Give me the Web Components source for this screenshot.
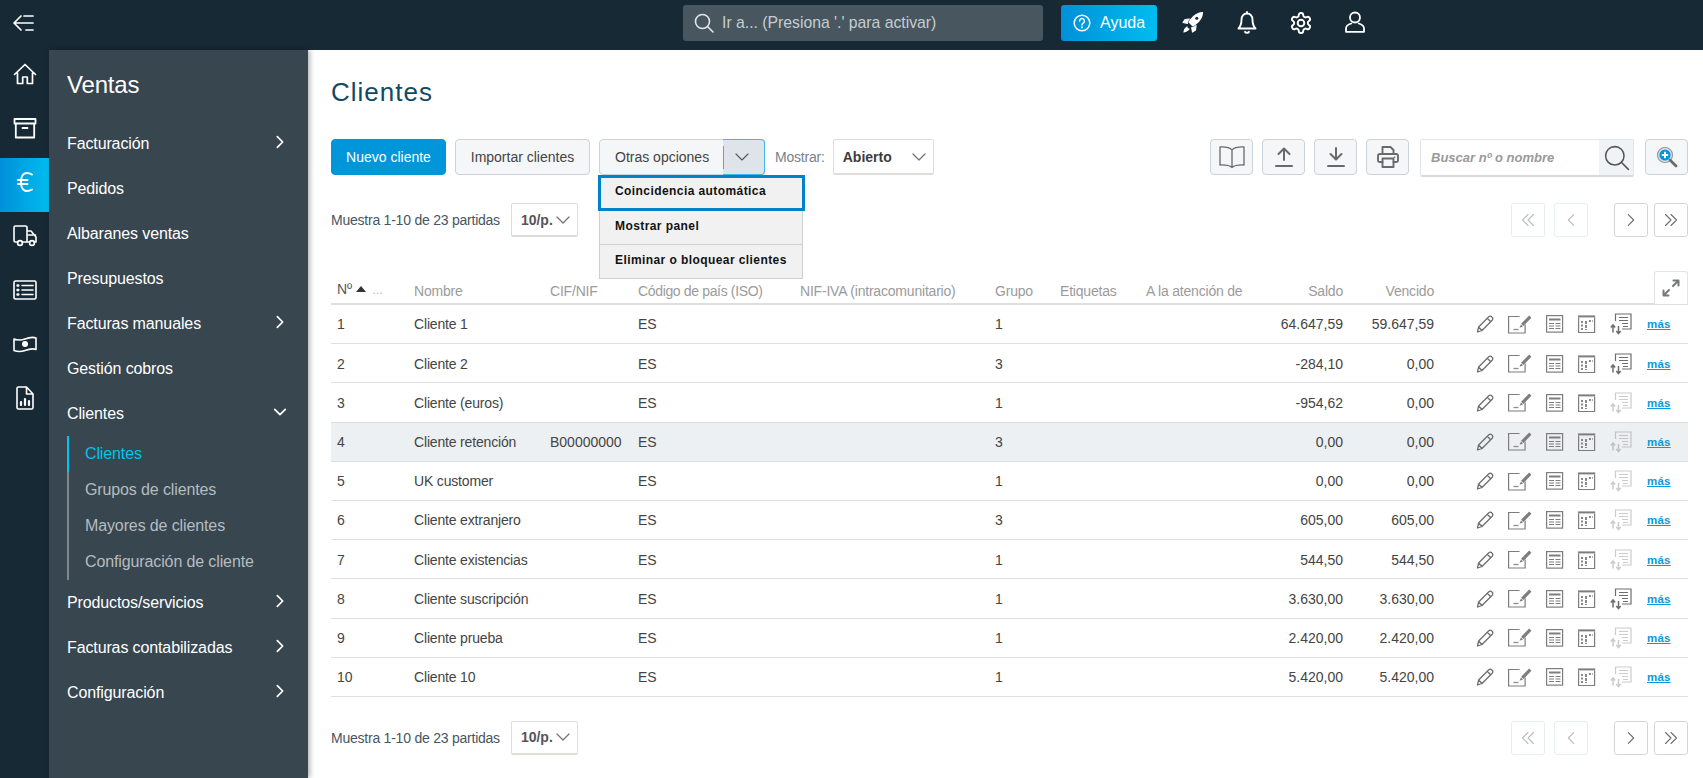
<!DOCTYPE html>
<html lang="es">
<head>
<meta charset="utf-8">
<title>Clientes</title>
<style>
	html, body { margin: 0; height: 100%; }
	body { font: 14px "Liberation Sans", Arial, sans-serif; color: #333; overflow: hidden; }
</style>
</head>
<body>
<erp-app>
	<top-bar slot="top"></top-bar>
	<icon-rail slot="rail"></icon-rail>
	<side-nav slot="nav"></side-nav>
	<clients-page slot="main"></clients-page>
</erp-app>

<script>
const svg = (w, h, vb, body, sw = 1.6) =>
	`<svg width="${w}" height="${h}" viewBox="${vb}" fill="none" stroke="currentColor" stroke-width="${sw}" stroke-linecap="round" stroke-linejoin="round">${body}</svg>`

const chevron = (size, dir, sw = 2) => {
	const paths = { right: "M8 4l8 8-8 8", left: "M16 4l-8 8 8 8", down: "M4 8l8 8 8-8" }
	return svg(size, size, "0 0 24 24", `<path d="${paths[dir]}"/>`, sw)
}

const icons = {
	back: svg(22, 18, "0 0 22 18", `<path d="M9 2L2 9l7 7M2 9h19M12 2h9M14 16h7" />`, 1.7),
	home: svg(24, 24, "0 0 24 24", `<path d="M1.5 12.5L12 2.5l10.5 10M4.5 11v10.5h5.2v-6.5h4.6v6.5h5.2V11"/>`, 1.7),
	archive: svg(24, 24, "0 0 24 24", `<path d="M1.5 3h21v4.5h-21zM2.8 7.5v14h18.4v-14M9.5 12h5"/>`, 1.8),
	euro: svg(16, 20, "0 0 16 20", `<path d="M15 2.5C13 1.300 11.500 1 10 1 6 1 4 5 4 10s2 9 6 9c1.500 0 3-.3 5-1.500M1 8h9.500M1 12h9.500"/>`, 2),
	truck: svg(24, 22, "0 0 24 22", `<path d="M5 17H2.500A1.500 1.500 0 0 1 1 15.500V2.500A1.500 1.500 0 0 1 2.500 1h10A1.500 1.500 0 0 1 14 2.500V17H9M14 6h4l5 6v5h-2M14 17h3M15.500 10h7"/><circle cx="7" cy="18" r="2.400"/><circle cx="19" cy="18" r="2.400"/>`, 1.6),
	list: svg(24, 20, "0 0 24 20", `<rect x="1" y="1" width="22" height="18" rx="1.500"/><path d="M9 5.500h11M9 10h11M9 14.500h11"/><path d="M4.500 5.500h.8M4.500 10h.8M4.500 14.500h.8" stroke-width="2.400"/>`, 1.6),
	money: svg(24, 18, "0 0 24 18", `<path d="M1 4c4 1.500 7 1.500 11 0s7-2.500 11-1v11.500c-4-1.500-7-.5-11 1s-7 1.500-11 0z"/><circle cx="12" cy="9" r="3" fill="currentColor" stroke="none"/>`, 1.6),
	report: svg(18, 24, "0 0 18 24", `<path d="M2.500 1h8L17 8v13.500a1.500 1.500 0 0 1-1.500 1.500h-13A1.500 1.500 0 0 1 1 21.500v-19A1.500 1.500 0 0 1 2.500 1zM10.500 1v7H17"/><path d="M5 19v-3M9 19v-6M13 19v-4" stroke-width="2.200"/>`, 1.6),
	search: svg(20, 20, "0 0 20 20", `<circle cx="8.500" cy="8.500" r="7"/><path d="M13.500 13.500l5.500 5.500"/>`, 1.6),
	help: svg(18, 18, "0 0 18 18", `<circle cx="9" cy="9" r="7.800"/><path d="M6.600 7a2.400 2.400 0 1 1 3.600 2.100c-.8.5-1.200.9-1.200 1.800"/><path d="M9 13.300v.1" stroke-width="1.900"/>`, 1.5),
	rocket: svg(22, 22, "0 0 22 22", `<path d="M20.500 1.500c-5 .3-8.500 2.800-11.300 6.500L7 11l4 4 3-2.200c3.700-2.800 6.200-6.300 6.500-11.300z" fill="currentColor"/><path d="M7.500 8L3 8.500 1 11.500l4.500.8M14 14.500l-.5 4.500-3 2-.8-4.500M5 16c-1.500.8-2.500 2.500-3 5 2.500-.5 4.200-1.500 5-3" fill="currentColor"/><circle cx="14.800" cy="7.200" r="1.500" fill="#172935" stroke="none"/>`, 1.2),
	bell: svg(20, 24, "0 0 20 24", `<path d="M10 2.500c-3.600 0-5.500 2.800-5.500 6 0 4.500-1 7-3 9h17c-2-2-3-4.500-3-9 0-3.200-1.900-6-5.500-6zM10 1v1.500M8 20.800c.5 1.300 3.500 1.300 4 0"/>`, 1.9),
	gear: svg(24, 24, "0 0 24 24", `<path d="M12.220 2h-.44a2 2 0 0 0-2 2v.18a2 2 0 0 1-1 1.730l-.43.250a2 2 0 0 1-2 0l-.15-.08a2 2 0 0 0-2.730.730l-.22.380a2 2 0 0 0 .730 2.730l.15.100a2 2 0 0 1 1 1.720v.510a2 2 0 0 1-1 1.740l-.15.090a2 2 0 0 0-.730 2.730l.22.380a2 2 0 0 0 2.730.730l.15-.08a2 2 0 0 1 2 0l.43.250a2 2 0 0 1 1 1.730V20a2 2 0 0 0 2 2h.44a2 2 0 0 0 2-2v-.18a2 2 0 0 1 1-1.730l.43-.25a2 2 0 0 1 2 0l.15.080a2 2 0 0 0 2.730-.730l.22-.390a2 2 0 0 0-.730-2.730l-.15-.08a2 2 0 0 1-1-1.740v-.5a2 2 0 0 1 1-1.740l.15-.090a2 2 0 0 0 .730-2.730l-.22-.380a2 2 0 0 0-2.730-.730l-.15.080a2 2 0 0 1-2 0l-.43-.250a2 2 0 0 1-1-1.730V4a2 2 0 0 0-2-2z"/><circle cx="12" cy="12" r="3.300"/>`, 1.9),
	user: svg(20, 22, "0 0 20 22", `<circle cx="10" cy="6.500" r="5"/><path d="M6.300 12.500C3 13.500 1 15 1 17.500v3.300h18v-3.300c0-2.500-2-4-5.300-5"/>`, 1.8),
	book: svg(28, 24, "0 0 28 24", `<path d="M14 5C12 2.800 8 1.800 2 2v18c6-.2 10 .8 12 2.500 2-1.700 6-2.700 12-2.500V2c-6-.2-10 .8-12 3zM14 5v17.500"/>`, 1.3),
	upload: svg(20, 22, "0 0 20 22", `<path d="M10 14V3M4.500 8L10 2.500 15.500 8M2 20h16"/>`, 2),
	download: svg(20, 22, "0 0 20 22", `<path d="M10 2v11M4.500 8l5.500 5.500L15.500 8M2 20h16"/>`, 2),
	print: svg(24, 24, "0 0 24 24", `<path d="M6.500 9V2h8l3 3v4M6.500 17H3.500A1.500 1.500 0 0 1 2 15.500V11a2 2 0 0 1 2-2h16a2 2 0 0 1 2 2v4.500a1.500 1.500 0 0 1-1.500 1.500h-3"/><path d="M6.500 13.500h11V22h-11z"/><path d="M18.500 12.200h.2" stroke-width="1.6"/>`, 1.9),
	zoomPlus: `<svg width="22" height="22" viewBox="0 0 22 22" fill="none"><circle cx="9" cy="9" r="7.500" fill="#dde3e6" stroke="#8f9a9f" stroke-width="1.200"/><path d="M14 14l6 6" stroke="#6b6b6b" stroke-width="2.800" stroke-linecap="round"/><circle cx="9" cy="9" r="5.600" fill="#0096db"/><path d="M9 5.800v6.400M5.800 9h6.400" stroke="#fff" stroke-width="2"/></svg>`,
	expand: svg(18, 18, "0 0 18 18", `<path d="M11 7l5-5M11.500 1.500h5v5" /><path d="M7 11l-5 5M1.500 11.500v5h5"/>`, 2),
	pencil: svg(18, 18, "0 0 18 18", `<path d="M12.800 1.800a2 2 0 0 1 2.900 0l.5.500a2 2 0 0 1 0 2.900L6 15.500 1.500 17 2.600 12zM11.300 3.300l3.400 3.400M2.600 12L6 15.500"/>`, 1.3),
	sign: `<svg width="24" height="19" viewBox="0 0 24 19" fill="none"><path d="M11.500 1.500H.6V18h16.500V9.500" stroke="#7d7d7d" stroke-width="1.200"/><path d="M21.200.6l2.200 2.200-8 8.200-2.300-2.200z" fill="#7d7d7d"/><path d="M13 9.500l2 2-3.500 1.300z" fill="#7d7d7d"/><path d="M5.500 14.500h5" stroke="#8d8d8d" stroke-width="1.300"/></svg>`,
	lines: `<svg width="18" height="18" viewBox="0 0 18 18" fill="none" stroke="#7d7d7d"><rect x=".6" y=".6" width="16" height="16.500" stroke-width="1.200"/><path d="M3 4.500h11.500" stroke-width="2"/><path d="M3 8.500h5M9.500 8.500h5M3 11h5M9.500 11h5M3 13.500h5M9.500 13.500h5" stroke-width="1"/></svg>`,
	cal: `<svg width="18" height="18" viewBox="0 0 18 18" fill="none" stroke="#7d7d7d"><path d="M.6 2.500v15h16v-15" stroke-width="1.200"/><path d="M0 1.400h17.200" stroke-width="2"/><path d="M4 6v2M4 9.500v2M4 13v2" stroke-width="1.800"/><path d="M8 6v9" stroke-width="1.800" stroke-dasharray="3 1"/><path d="M11 6h1.800M14 6h.6" stroke-width="1.800"/></svg>`,
	move: `<svg width="22" height="22" viewBox="0 0 22 22" fill="none" stroke="currentColor"><path d="M5.500 8V1h15.500v15H12" stroke-width="1.200"/><path d="M9 4.500h9M9 7.500h9M12 10.500h6M13 13.500h5" stroke-width="1.200"/><path d="M3 19.500v-7M.8 14.500L3 12l2.200 2.500" stroke-width="1.500"/><path d="M8.500 13v7.500M6.300 18l2.200 2.500 2.200-2.500" stroke-width="1.500"/></svg>`
}

class ErpApp extends HTMLElement {
	constructor() {
		super()
		this.attachShadow({ mode: "open" })
		this.shadowRoot.innerHTML = /*html*/ `<style>
			:host { display: grid; grid-template: 50px 1fr / 49px 259px 1fr; height: 100vh; background: #fff; }
			::slotted([slot=top]) { grid-column: 1 / -1; }
		</style>
		<slot name="top"></slot><slot name="rail"></slot><slot name="nav"></slot><slot name="main"></slot>`
	}
}

class TopBar extends HTMLElement {
	constructor() {
		super()
		this.attachShadow({ mode: "open" })
		this.shadowRoot.innerHTML = /*html*/ `<style>
			:host { display: flex; align-items: center; background: #172935; color: #fff; height: 50px; padding-bottom: 4px; box-sizing: border-box; }
			.back { margin-left: 12px; display: flex; margin-right: auto; }
			.search { width: 360px; height: 36px; border-radius: 3px; background: #47565f; display: flex; align-items: center; color: #e3e7ea; box-sizing: border-box; padding-left: 11px; gap: 8px; }
			.search span { font-size: 15.75px; color: #c6cdd1; }
			.help { width: 96px; height: 36px; margin-left: 18px; border-radius: 3px; background: linear-gradient(90deg, #0090d9, #00bcee); display: flex; align-items: center; padding-left: 12px; box-sizing: border-box; gap: 9px; font-size: 16px; }
			.tool { display: flex; justify-content: center; width: 54px; }
			.tools { display: flex; margin: 0 321px 0 9px; }
		</style>
		<div class="back">${icons.back}</div>
		<div class="search">${icons.search}<span>Ir a... (Presiona '.' para activar)</span></div>
		<div class="help">${icons.help}<span>Ayuda</span></div>
		<div class="tools">
			<div class="tool">${icons.rocket}</div>
			<div class="tool">${icons.bell}</div>
			<div class="tool">${icons.gear}</div>
			<div class="tool">${icons.user}</div>
		</div>`
	}
}

class IconRail extends HTMLElement {
	constructor() {
		super()
		this.attachShadow({ mode: "open" })
		const names = ["home", "archive", "euro", "truck", "list", "money", "report"]
		this.shadowRoot.innerHTML = /*html*/ `<style>
			:host { display: block; background: #172935; color: #fff; }
			div { height: 54px; padding-bottom: 6px; box-sizing: border-box; display: flex; align-items: center; justify-content: center; }
			.on { background: linear-gradient(90deg, #0090d9, #00bcee); }
		</style>
		${names.map((n) => `<div class="${n === "euro" ? "on" : ""}">${icons[n]}</div>`).join("")}`
	}
}

class NavItem extends HTMLElement {
	constructor() {
		super()
		this.attachShadow({ mode: "open" })
	}
	connectedCallback() {
		const arrow = this.getAttribute("arrow")
		this.shadowRoot.innerHTML = /*html*/ `<style>
			:host { display: flex; align-items: center; justify-content: space-between; height: 45px; padding: 0 20px 0 18px; color: #fff; font-size: 16px; letter-spacing: -.12px; }
			span { display: flex; margin-top: -3px; }
		</style>
		<slot></slot><span>${arrow ? chevron(16, arrow, 2.6) : ""}</span>`
	}
}

class SideNav extends HTMLElement {
	constructor() {
		super()
		this.attachShadow({ mode: "open" })
		this.shadowRoot.innerHTML = /*html*/ `<style>
			:host { display: block; background: #37464f; box-shadow: 2px 0 5px rgba(0,0,0,.3); position: relative; z-index: 1; }
			h2 { margin: 0; padding: 20px 18px 21px; font: 24px/30px "Liberation Sans", Arial, sans-serif; color: #fff; letter-spacing: -.2px; }
			.sub { margin-left: 18px; border-left: 2px solid #7d878d; }
			.sub div { height: 36px; line-height: 36px; padding-left: 16px; font-size: 16px; letter-spacing: -.12px; color: #b6bcc0; }
			.sub div.on { color: #00c3f0; margin-left: -2px; border-left: 2px solid #00c3f0; }
		</style>
		<h2>Ventas</h2>
		<nav-item arrow="right">Facturación</nav-item>
		<nav-item>Pedidos</nav-item>
		<nav-item>Albaranes ventas</nav-item>
		<nav-item>Presupuestos</nav-item>
		<nav-item arrow="right">Facturas manuales</nav-item>
		<nav-item>Gestión cobros</nav-item>
		<nav-item arrow="down">Clientes</nav-item>
		<div class="sub">
			<div class="on">Clientes</div>
			<div>Grupos de clientes</div>
			<div>Mayores de clientes</div>
			<div>Configuración de cliente</div>
		</div>
		<nav-item arrow="right">Productos/servicios</nav-item>
		<nav-item arrow="right">Facturas contabilizadas</nav-item>
		<nav-item arrow="right">Configuración</nav-item>`
	}
}

class SelectBox extends HTMLElement {
	constructor() {
		super()
		this.attachShadow({ mode: "open" })
		this.shadowRoot.innerHTML = /*html*/ `<style>
			:host { display: flex; align-items: center; justify-content: space-between; box-sizing: border-box; border: 1px solid #dcdfd9; border-bottom-width: 2px; border-radius: 2px; font-size: 14px; font-weight: bold; color: #3c3c3c; padding: 0 5px 0 9px; background: #fff; }
			span { display: flex; color: #757575; }
		</style>
		<slot></slot><span>${chevron(18, "down", 1.7)}</span>`
	}
}

class PagerBar extends HTMLElement {
	constructor() {
		super()
		this.attachShadow({ mode: "open" })
		const dbl = (d) => svg(16, 16, "0 0 16 16", `<path d="${d}"/>`, 1.1)
		this.shadowRoot.innerHTML = /*html*/ `<style>
			:host { display: flex; align-items: center; height: 34px; font-size: 14px; color: #47565f; }
			b { font-weight: normal; letter-spacing: -.23px; }
			select-box { width: 67px; height: 34px; margin-left: 11px; color: #555; }
			.pages { margin-left: auto; display: flex; gap: 9px; }
			.pages div { width: 34px; height: 34px; box-sizing: border-box; display: flex; align-items: center; justify-content: center; border: 1px solid #d3d6d8; border-radius: 3px; color: #6e6e6e; }
			.pages div.off { border-color: #e8edf0; color: #b8bec2; }
			.pages div.gap { margin-right: 17px; }
			.pages div.next { margin-right: -3px; }
		</style>
		<b>Muestra 1-10 de 23 partidas</b>
		<select-box>10/p.</select-box>
		<div class="pages">
			<div class="off">${dbl("M8 2.500L2.500 8 8 13.500M13.500 2.500L8 8l5.500 5.500")}</div>
			<div class="off gap">${chevron(16, "left", 1.7)}</div>
			<div class="next">${chevron(16, "right", 1.7)}</div>
			<div>${dbl("M2.500 2.500L8 8l-5.500 5.500M8 2.500L13.500 8 8 13.500")}</div>
		</div>`
	}
}

class ToolBar extends HTMLElement {
	constructor() {
		super()
		this.attachShadow({ mode: "open" })
		this.shadowRoot.innerHTML = /*html*/ `<style>
			:host { display: flex; align-items: flex-start; height: 36px; font-size: 14px; color: #444; position: relative; }
			.btn { height: 36px; box-sizing: border-box; border: 1px solid #ccd3d8; border-radius: 4px; background: #f4f6f8; display: flex; align-items: center; justify-content: center; }
			.primary { width: 115px; background: #0096d9; border-color: #0096d9; color: #fff; }
			.import { width: 135px; margin-left: 9px; }
			.more { width: 166px; margin-left: 9px; position: relative; justify-content: flex-start; padding-left: 15px; }
			.caret { position: absolute; right: -1px; top: -1px; bottom: -1px; width: 42px; box-sizing: border-box; background: #dfe3ea; border: 1px solid #3fb8ee; border-left: 0; border-radius: 0 4px 4px 0; display: flex; align-items: center; justify-content: center; color: #555; padding-right: 3px; }
			.caret::before { content: ""; position: absolute; left: 0; top: 6px; bottom: 5px; width: 1px; background: #8f959a; }
			.label { margin-left: 10px; color: #7a8288; line-height: 36px; letter-spacing: -.2px; }
			select-box { width: 101px; height: 36px; margin-left: 8px; padding-left: 9px; }
			.icon { width: 43px; margin-left: 9px; color: #6a6a6a; }
			.first { margin-left: auto; }
			.find { width: 214px; height: 38px; box-sizing: border-box; margin-left: 11px; border: 1px solid #e3e5e6; border-bottom: 2px solid #d7d9da; border-radius: 2px; display: flex; }
			.find span { flex: 1; font-size: 13px; font-style: italic; font-weight: bold; color: #9a9a9a; line-height: 36px; padding-left: 10px; }
			.find div { width: 34px; box-sizing: border-box; padding-left: 2px; background: #eff3f5; display: flex; align-items: center; justify-content: center; color: #555; }
			.last { margin-left: 11px; }
			.menu { position: absolute; left: 268px; top: 36px; width: 204px; box-sizing: border-box; border: 1px solid #cfcfcf; border-top: 0; background: #f1f1f1; font-size: 12px; font-weight: bold; color: #111; letter-spacing: .42px; z-index: 2; }
			.menu div { height: 33px; line-height: 30px; padding-left: 15px; border-top: 1px solid #cfcfcf; }
			.menu div.focus { height: 36px; line-height: 27px; border: 3px solid #0082c8; margin: 0 -3px 0 -2px; padding-left: 14px; box-sizing: border-box; }
			.menu div.focus + div { border-top: 0; }
		</style>
		<div class="btn primary">Nuevo cliente</div>
		<div class="btn import">Importar clientes</div>
		<div class="btn more">Otras opciones<div class="caret">${chevron(18, "down", 1.5)}</div></div>
		<span class="label">Mostrar:</span>
		<select-box>Abierto</select-box>
		<div class="btn icon first">${icons.book}</div>
		<div class="btn icon">${icons.upload}</div>
		<div class="btn icon">${icons.download}</div>
		<div class="btn icon">${icons.print}</div>
		<div class="find"><span>Buscar nº o nombre</span><div>${svg(26, 26, "0 0 24 24", `<circle cx="10" cy="10" r="8.500"/><path d="M16 16l6.500 6.500"/>`, 1.4)}</div></div>
		<div class="btn icon last">${icons.zoomPlus}</div>
		<div class="menu">
			<div class="focus">Coincidencia automática</div>
			<div>Mostrar panel</div>
			<div>Eliminar o bloquear clientes</div>
		</div>`
	}
}

const CLIENTS = [
	["1", "Cliente 1", "", "1", "64.647,59", "59.647,59", true],
	["2", "Cliente 2", "", "3", "-284,10", "0,00", true],
	["3", "Cliente (euros)", "", "1", "-954,62", "0,00"],
	["4", "Cliente retención", "B00000000", "3", "0,00", "0,00"],
	["5", "UK customer", "", "1", "0,00", "0,00"],
	["6", "Cliente extranjero", "", "3", "605,00", "605,00"],
	["7", "Cliente existencias", "", "1", "544,50", "544,50"],
	["8", "Cliente suscripción", "", "1", "3.630,00", "3.630,00", true],
	["9", "Cliente prueba", "", "1", "2.420,00", "2.420,00"],
	["10", "Cliente 10", "", "1", "5.420,00", "5.420,00"]
]

class ClientsTable extends HTMLElement {
	constructor() {
		super()
		this.attachShadow({ mode: "open" })
		const row = ([n, name, cif, group, saldo, vencido, active], i) => /*html*/ `
			<div class="row ${i === 3 ? "hl" : ""}">
				<span>${n}</span><span class="t">${name}</span><span>${cif}</span><span>ES</span><span></span><span>${group}</span><span></span><span></span>
				<span class="r">${saldo}</span><span class="r">${vencido}</span>
				<span class="acts">
					<i style="width:32px">${icons.pencil}</i><i style="width:38px">${icons.sign}</i><i style="width:32px">${icons.lines}</i><i style="width:32px">${icons.cal}</i>
					<i class="${active ? "" : "off"}" style="width:37px">${icons.move}</i><a>más</a>
				</span>
			</div>`
		this.shadowRoot.innerHTML = /*html*/ `<style>
			:host { display: block; font-size: 14px; color: #444; position: relative; }
			.row { display: grid; grid-template-columns: 77px 136px 88px 162px 195px 65px 86px 120px 89px 91px 248px; height: 39.2px; padding-top: .6px; align-items: center; border-bottom: 1px solid #dfdfdf; box-sizing: border-box; }
			.row > span { padding: 0 6px; white-space: nowrap; }
			.t { letter-spacing: -.17px; }
			.head { height: 33px; padding-top: 0; border-bottom: 2px solid #dedede; align-items: end; color: #9b9b9b; line-height: 24px; letter-spacing: -.2px; }
			.hl { background: #edf0f2; }
			.r { text-align: right; }
			.acts { display: flex; align-items: center; padding: 0 0 0 36px !important; }
			.acts i { display: flex; color: #6e6e6e; }
			.acts i.off { opacity: .35; }
			a { color: #0a9ad9; font-size: 11.5px; font-weight: bold; text-decoration: underline; letter-spacing: .2px; }
			.sort { display: inline-block; border: 5px solid transparent; border-bottom: 6px solid #333; border-top: 0; margin: 0 7px 2px 4px; }
			.dots { font-size: 9px; color: #bbb; letter-spacing: 1px; }
			.expand { position: absolute; right: 0; top: -1px; width: 34px; height: 33px; box-sizing: border-box; border: 1px solid #e4e4e4; border-bottom: 0; border-radius: 3px 3px 0 0; background: #fff; display: flex; align-items: center; justify-content: center; color: #74797d; }
		</style>
		<div class="row head">
			<span style="color:#555">Nº<i class="sort"></i><b class="dots">...</b></span><span>Nombre</span><span>CIF/NIF</span><span style="letter-spacing:-.35px">Código de país (ISO)</span><span>NIF-IVA (intracomunitario)</span><span>Grupo</span><span>Etiquetas</span><span>A la atención de</span><span class="r">Saldo</span><span class="r">Vencido</span><span></span>
		</div>
		<div class="expand">${icons.expand}</div>
		${CLIENTS.map(row).join("")}`
	}
}

class ClientsPage extends HTMLElement {
	constructor() {
		super()
		this.attachShadow({ mode: "open" })
		this.shadowRoot.innerHTML = /*html*/ `<style>
			:host { display: block; padding: 26px 15px 0 23px; min-width: 0; }
			h1 { margin: 0 0 31px; font: 26px/32px "Liberation Sans", Arial, sans-serif; letter-spacing: 1px; color: #124a63; }
			pager-bar { margin-top: 28px; }
			clients-table { margin-top: 35px; }
			.foot { margin-top: 24px; }
		</style>
		<h1>Clientes</h1>
		<tool-bar></tool-bar>
		<pager-bar></pager-bar>
		<clients-table></clients-table>
		<pager-bar class="foot"></pager-bar>`
	}
}

customElements.define("erp-app", ErpApp)
customElements.define("top-bar", TopBar)
customElements.define("icon-rail", IconRail)
customElements.define("nav-item", NavItem)
customElements.define("side-nav", SideNav)
customElements.define("select-box", SelectBox)
customElements.define("pager-bar", PagerBar)
customElements.define("tool-bar", ToolBar)
customElements.define("clients-table", ClientsTable)
customElements.define("clients-page", ClientsPage)
</script>
</body>
</html>
